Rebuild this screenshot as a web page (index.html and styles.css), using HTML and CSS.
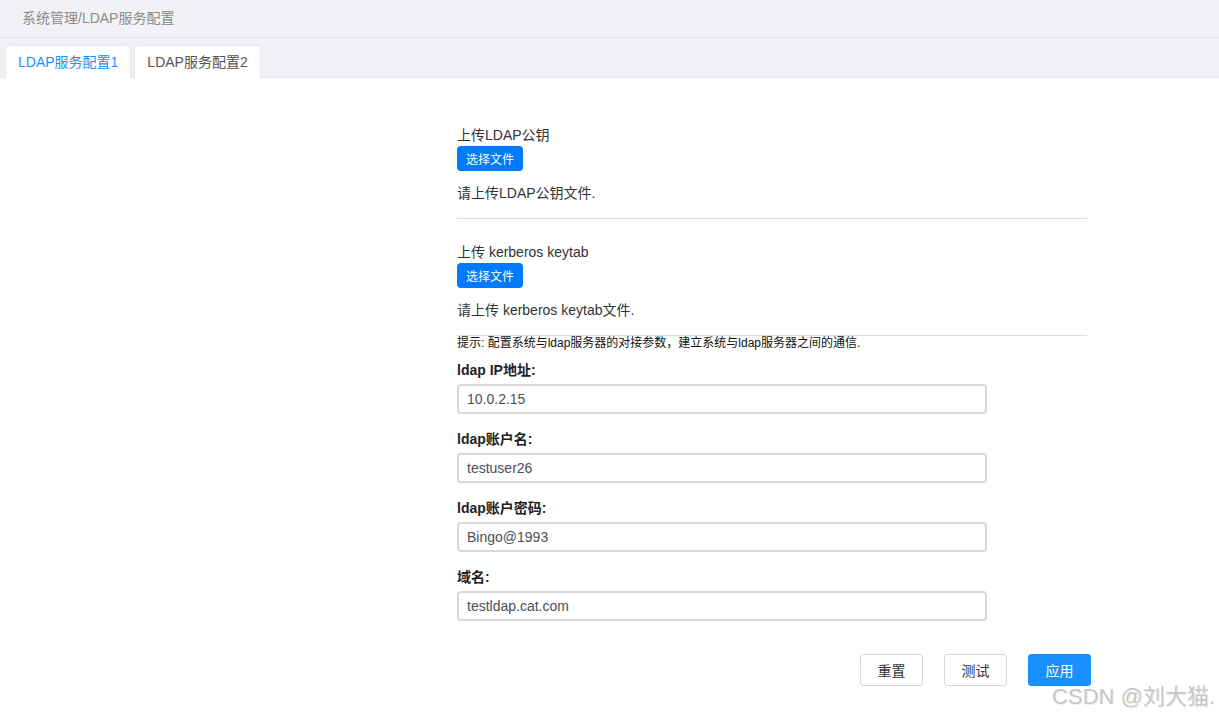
FILE: index.html
```html
<!DOCTYPE html>
<html lang="zh-CN">
<head>
<meta charset="utf-8">
<title>LDAP服务配置</title>
<link rel="stylesheet" href="styles.css">
</head>
<body>
<div class="crumb">系统管理/LDAP服务配置</div>
<div class="tabs">
  <div class="tab active">LDAP服务配置1</div>
  <div class="tab">LDAP服务配置2</div>
</div>
<main class="content">
  <div class="col">
    <div class="txt">上传LDAP公钥</div>
    <button class="file-btn">选择文件</button>
    <div class="txt help">请上传LDAP公钥文件.</div>
    <hr class="sep sep1">
    <div class="txt up2">上传 kerberos keytab</div>
    <button class="file-btn">选择文件</button>
    <div class="txt help">请上传 kerberos keytab文件.</div>
    <hr class="sep sep2">
    <div class="tip">提示: 配置系统与ldap服务器的对接参数，建立系统与ldap服务器之间的通信.</div>
    <div class="field first">
      <label class="lbl">ldap IP地址:</label>
      <div class="inp">10.0.2.15</div>
    </div>
    <div class="field">
      <label class="lbl">ldap账户名:</label>
      <div class="inp">testuser26</div>
    </div>
    <div class="field">
      <label class="lbl">ldap账户密码:</label>
      <div class="inp">Bingo@1993</div>
    </div>
    <div class="field">
      <label class="lbl">域名:</label>
      <div class="inp">testldap.cat.com</div>
    </div>
    <div class="actions">
      <button class="btn">重置</button>
      <button class="btn">测试</button>
      <button class="btn primary">应用</button>
    </div>
  </div>
</main>
<div class="watermark">CSDN @刘大猫.</div>
</body>
</html>
```
FILE: styles.css
```css
* { box-sizing: border-box; }
html, body { margin: 0; padding: 0; }
body {
  font-family: "Liberation Sans", Arial, "Noto Sans CJK SC", sans-serif;
  background: #fff;
  color: #333;
  width: 1219px;
  height: 718px;
  overflow: hidden;
  position: relative;
}
.crumb {
  height: 38px;
  background: #f0f2f5;
  border-bottom: 1px solid #dcdfe6;
  color: #8c8c8c;
  font-size: 14px;
  line-height: 37px;
  padding-left: 22px;
}
.tabs {
  height: 40px;
  background: #f0f2f5;
  border-bottom: 1px solid #e4e7ed;
  display: flex;
  align-items: flex-end;
  gap: 3px;
  padding-left: 5px;
}
.tab {
  height: 33px;
  background: #fff;
  border: 1px solid #e4e7ed;
  border-bottom: none;
  border-radius: 4px 4px 0 0;
  padding: 0 12px;
  font-size: 14px;
  line-height: 33px;
  color: #555;
  margin-bottom: -1px;
}
.tab.active { color: #1890ff; }
.content { padding-top: 47px; }
.col {
  margin-left: 457px;
  width: 634px;
  display: flex;
  flex-direction: column;
  align-items: flex-start;
}
.txt {
  font-size: 14px;
  line-height: 20px;
  color: #333;
}
.file-btn {
  margin-top: 1px;
  height: 25px;
  width: 66px;
  padding: 0;
  border: none;
  border-radius: 4px;
  background: #007bff;
  color: #fff;
  font-family: inherit;
  font-size: 12px;
}
.help { margin-top: 12px; }
.sep {
  width: 630px;
  margin: 15px 0 0 0;
  border: none;
  border-top: 1px solid #dcdcdc;
  height: 0;
}
.up2 { margin-top: 23px; }
.tip {
  font-size: 12px;
  line-height: 14px;
  color: #111;
}
.field { margin-top: 15px; }
.field.first { margin-top: 10px; }
.lbl {
  display: block;
  font-size: 14px;
  line-height: 20px;
  font-weight: bold;
  color: #222;
}
.inp {
  margin-top: 4px;
  width: 530px;
  height: 30px;
  border: 2px solid #d4d9de;
  border-radius: 4px;
  padding-left: 8px;
  font-size: 14px;
  line-height: 26px;
  color: #495057;
}
.actions {
  align-self: stretch;
  margin-top: 33px;
  display: flex;
  justify-content: flex-end;
  gap: 21px;
}
.btn {
  width: 63px;
  height: 32px;
  border: 1px solid #d9d9d9;
  border-radius: 3px;
  background: #fff;
  color: #333;
  font-family: inherit;
  font-size: 14px;
  padding: 0;
}
.btn.primary {
  background: #1890ff;
  border-color: #1890ff;
  color: #fff;
}
.watermark {
  position: absolute;
  right: 4px;
  top: 683px;
  font-size: 22px;
  line-height: 28px;
  color: #c8c8c8;
  text-shadow: 1px 1px 1px rgba(0,0,0,0.08);
}
```
